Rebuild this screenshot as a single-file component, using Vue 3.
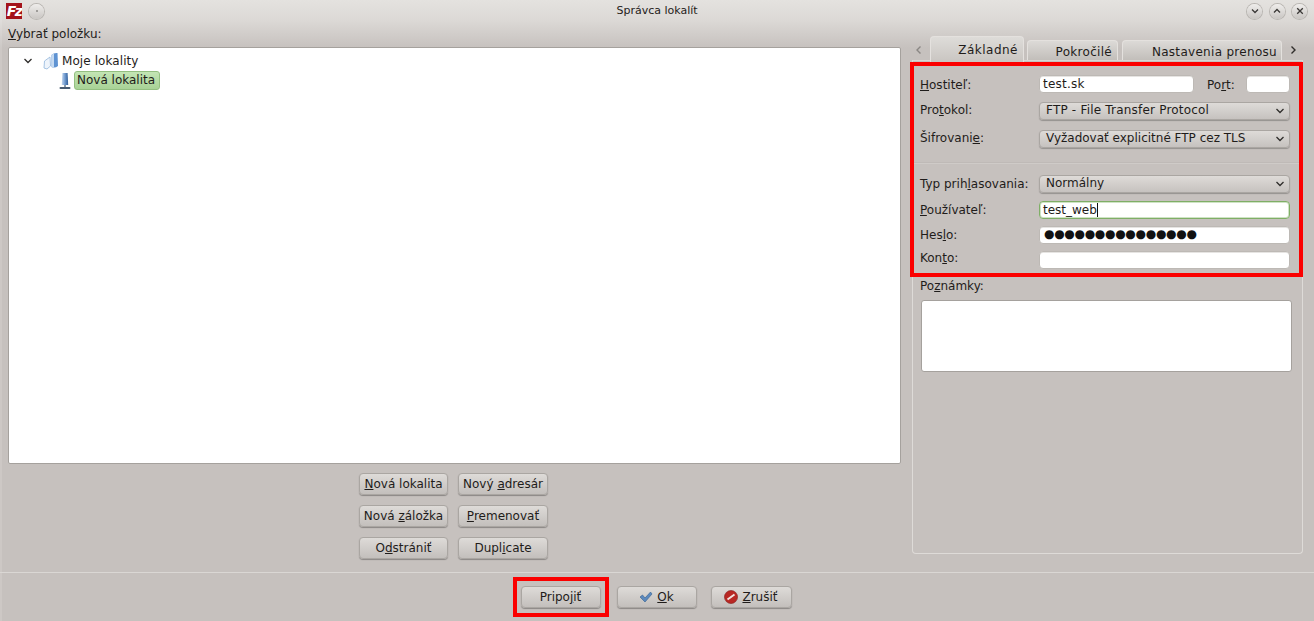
<script setup>
const actions = [
  { pre: '', key: 'N', post: 'ová lokalita' },
  { pre: 'Nový ', key: 'a', post: 'dresár' },
  { pre: 'Nová ', key: 'z', post: 'áložka' },
  { pre: '', key: 'P', post: 'remenovať' },
  { pre: 'O', key: 'd', post: 'stràniť'.replace('à', 'á') },
  { pre: 'Dupl', key: 'i', post: 'cate' }
]
</script>

<template>
  <div class="window">
    <header class="titlebar">
      <div class="tb-side tb-left">
        <span class="fz-logo">Fz</span>
        <span class="round-btn"><i class="pin"></i></span>
      </div>
      <div class="tb-title">Správca lokalít</div>
      <div class="tb-side tb-right">
        <span class="round-btn"><svg width="10" height="10" viewBox="0 0 10 10"><path d="M2 3.5 5 6.5 8 3.5" /></svg></span>
        <span class="round-btn"><svg width="10" height="10" viewBox="0 0 10 10"><path d="M2 6.5 5 3.5 8 6.5" /></svg></span>
        <span class="round-btn"><svg width="10" height="10" viewBox="0 0 10 10"><path d="M2.2 2.2 7.8 7.8M7.8 2.2 2.2 7.8" /></svg></span>
      </div>
    </header>

    <main class="main">
      <section class="left">
        <div class="left-label"><u>V</u>ybrať položku:</div>
        <div class="tree">
          <div class="tree-row root">
            <svg class="chev" width="10" height="8" viewBox="0 0 10 8"><path d="M1.5 2 5 5.5 8.5 2" /></svg>
            <svg class="folder" width="16" height="18" viewBox="0 0 16 18">
              <path d="M1.5 9 7 5 7.5 14 4 17 1 16Z" fill="#eef4fb" stroke="#9dbde0" stroke-width=".9" />
              <path d="M8.5 3 Q11 .5 14.5 1 L15 14 Q12 16.5 8.5 15Z" fill="#5f93d2" />
              <path d="M8.5 3 Q9.5 2 11 1.4 L11 15.6 Q9.5 15.5 8.5 15Z" fill="#c5daf1" />
            </svg>
            <span class="root-text">Moje lokality</span>
          </div>
          <div class="tree-row child">
            <svg class="server" width="12" height="18" viewBox="0 0 12 18">
              <defs>
                <linearGradient id="srv" x1="0" x2="1" y1="0" y2="0">
                  <stop offset="0" stop-color="#c2d6ee" />
                  <stop offset=".5" stop-color="#6f9ad0" />
                  <stop offset="1" stop-color="#2f5c96" />
                </linearGradient>
              </defs>
              <path d="M3.4 1 8.6 1 9.2 13 2.8 13Z" fill="url(#srv)" />
              <rect x="5" y="13" width="2" height="2" fill="#8a9bae" />
              <rect x="0.5" y="15" width="11" height="2" rx="1" fill="#465a72" />
            </svg>
            <span class="selected">Nová lokalita</span>
          </div>
        </div>
        <div class="actions">
          <button v-for="a in actions" :key="a.key" class="btn"><span>{{ a.pre }}<u>{{ a.key }}</u>{{ a.post }}</span></button>
        </div>
      </section>

      <section class="right">
        <div class="tabs">
          <svg class="tab-arrow dim" width="8" height="10" viewBox="0 0 8 10"><path d="M5.5 1.5 2 5 5.5 8.5" /></svg>
          <div class="tab active">Základné</div>
          <div class="tab t2">Pokročilé</div>
          <div class="tab t3">Nastavenia prenosu</div>
          <svg class="tab-arrow" width="8" height="10" viewBox="0 0 8 10"><path d="M2.5 1.5 6 5 2.5 8.5" /></svg>
        </div>
        <div class="panel">
          <div class="highlight form">
            <div class="row">
              <label class="lbl lower"><u>H</u>ostiteľ:</label>
              <div class="field host">test.sk</div>
              <label class="port-lbl lower">Po<u>r</u>t:</label>
              <div class="field port"></div>
            </div>
            <div class="row r-sel1">
              <label class="lbl raise">Pro<u>t</u>okol:</label>
              <div class="select"><span class="ftp">FTP - File Transfer Protocol</span><svg width="10" height="8" viewBox="0 0 10 8"><path d="M1.5 2 5 5.5 8.5 2" /></svg></div>
            </div>
            <div class="row r-sel2">
              <label class="lbl raise">Šifrovani<u>e</u>:</label>
              <div class="select">Vyžadovať explicitné FTP cez TLS<svg width="10" height="8" viewBox="0 0 10 8"><path d="M1.5 2 5 5.5 8.5 2" /></svg></div>
            </div>
            <div class="sep"></div>
            <div class="row r-type">
              <label class="lbl">Typ prih<u>l</u>asovania:</label>
              <div class="select">Normálny<svg width="10" height="8" viewBox="0 0 10 8"><path d="M1.5 2 5 5.5 8.5 2" /></svg></div>
            </div>
            <div class="row r-user">
              <label class="lbl"><u>P</u>oužívateľ:</label>
              <div class="field wide focus">test_web<span class="caret"></span></div>
            </div>
            <div class="row r-next">
              <label class="lbl">Hes<u>l</u>o:</label>
              <div class="field wide dots">●●●●●●●●●●●●●●●</div>
            </div>
            <div class="row r-next">
              <label class="lbl raise-more">Kon<u>t</u>o:</label>
              <div class="field wide"></div>
            </div>
          </div>
          <div class="notes-lbl">Po<u>z</u>námky:</div>
          <div class="notes"></div>
        </div>
      </section>
    </main>

    <footer class="footer">
      <div class="highlight connect"><button class="btn foot"><span>Pripo<u>j</u>iť</span></button></div>
      <button class="btn foot ok">
        <svg width="14" height="12" viewBox="0 0 14 12"><path d="M1 6 3.5 4 6 7 11.5 1 13 3 6 11Z" fill="#5b88bd" stroke="#33608f" stroke-width=".6" /></svg>
        <span><u>O</u>k</span>
      </button>
      <button class="btn foot cancel">
        <svg width="14" height="14" viewBox="0 0 14 14">
          <circle cx="7" cy="7" r="6.5" fill="#b92824" stroke="#7f1a18" stroke-width=".6" />
          <path d="M3.5 9.5 10.5 4.5" stroke="#f3e3e0" stroke-width="2" fill="none" />
        </svg>
        <span><u>Z</u>rušiť</span>
      </button>
    </footer>
  </div>
</template>

<style scoped>
.window {
  width: 1314px;
  height: 621px;
  display: flex;
  flex-direction: column;
  overflow: hidden;
  background: linear-gradient(#e4e2df 0, #dcd9d6 20px, #c6c1be 48px, #c6c1be 100%);
  font-family: "DejaVu Sans", sans-serif;
  font-size: 12px;
  color: #1f1c1a;
  box-shadow: inset 2px 0 0 rgba(255, 255, 255, .12);
}
u { text-underline-offset: 1px; }

.titlebar { height: 20px; flex: none; display: flex; align-items: center; }
.tb-side { width: 100px; display: flex; align-items: center; flex: none; padding-top: 2px; box-sizing: border-box; height: 20px; }
.tb-left { padding-left: 6px; gap: 7px; }
.tb-right { padding-right: 7px; gap: 7.5px; justify-content: flex-end; }
.tb-title { flex: 1; text-align: center; font-size: 11px; }
.fz-logo {
  width: 16px; height: 16px; background: #a4131a; color: #fff; font: italic bold 14px/16px "DejaVu Sans", sans-serif;
  text-align: center; letter-spacing: -1.5px; overflow: hidden;
}
.round-btn {
  width: 15px; height: 15px; border-radius: 50%; display: flex; align-items: center; justify-content: center;
  background: linear-gradient(#efedeb, #c9c6c3); box-shadow: 0 0 0 1px #b9b6b2;
}
.round-btn svg path { fill: none; stroke: #3a3836; stroke-width: 1.3; }
.pin { width: 2px; height: 2px; border-radius: 50%; background: #8a8784; }

.main { flex: 1; min-height: 0; display: flex; padding-left: 8px; border-bottom: 1px solid #dad7d4; }
.left { width: 893px; flex: none; display: flex; flex-direction: column; }
.left-label { height: 27px; line-height: 28px; }
.tree {
  height: 417px; box-sizing: border-box; background: #fff; border: 1px solid #a5a19d; border-radius: 2px;
  padding-top: 3px;
}
.tree-row { display: flex; align-items: center; height: 20px; }
.root { padding-left: 14px; }
.chev path, .select svg path { fill: none; stroke: #2f2d2b; stroke-width: 1.3; }
.folder { margin-left: 10px; }
.root-text { margin-left: 3px; letter-spacing: .08px; }
.child { padding-left: 50px; height: 19px; }
.selected {
  margin-left: 3px; height: 19px; line-height: 17px; padding: 0 2px; box-sizing: border-box; width: 86px; white-space: nowrap;
  background: linear-gradient(#c3e5b4, #a8d296); border: 1px solid #93bf80; border-radius: 3px;
}
.actions {
  margin: 9px auto 0 351px; display: grid; grid-template-columns: 89px 90px; gap: 10px; grid-auto-rows: 22px;
}

.btn {
  font: 12px "DejaVu Sans", sans-serif; color: #1f1c1a; padding: 0; box-sizing: border-box;
  background: linear-gradient(#dedbd8, #c3bfbc); border: 1px solid #aaa6a2; border-radius: 4px;
  box-shadow: 0 1px 1px rgba(0, 0, 0, .3);
  display: flex; align-items: center; justify-content: center; gap: 4px; white-space: nowrap;
}

.right { width: 393px; margin-left: 9px; flex: none; display: flex; flex-direction: column; }
.tabs { height: 24px; margin-top: 16px; display: flex; align-items: flex-end; flex: none; padding-left: 5px; }
.tab-arrow { margin-bottom: 5px; flex: none; }
.tab-arrow path { fill: none; stroke: #2f2d2b; stroke-width: 1.4; }
.tab-arrow.dim path { stroke: #8a8784; }
.tab {
  box-sizing: border-box; border: 1px solid #e4e1de; border-bottom: 0; border-radius: 4px 4px 0 0;
  text-align: right; padding-right: 5px; background: linear-gradient(#dcdad7, #c2beba); letter-spacing: .3px; white-space: nowrap;
}
.active {
  width: 94px; height: 26px; margin: 0 3px 0 7px; line-height: 27px; position: relative; top: 2px; letter-spacing: .5px;
  background: linear-gradient(#dedcd9, #c9c5c1);
}
.t2 { width: 91px; height: 20px; line-height: 23px; margin-right: 4px; }
.t3 { width: 160px; height: 20px; line-height: 23px; margin-right: 7px; padding-right: 4px; }

.panel {
  height: 494px; box-sizing: border-box; margin-left: 2px; border: 1px solid #dedbd8; border-top-color: #d9d6d3; border-radius: 0 0 4px 4px;
  padding: 0 10px 0 8px;
}
.highlight { border: 4px solid #fb0000; box-sizing: border-box; }
.form { width: 393px; height: 215px; margin: 1px 0 0 -11px; padding: 9px 9px 0 6px; }
.row { display: flex; align-items: center; height: 18px; }
.lbl { width: 119px; flex: none; white-space: nowrap; }
.lower { padding-top: 2px; }
.raise { padding-bottom: 2px; }
.raise-more { padding-bottom: 4px; }
.r-sel1 { margin-top: 9px; }
.r-sel2 { margin-top: 10px; }
.r-type { margin-top: 11px; }
.r-user { margin-top: 8px; }
.r-next { margin-top: 7px; }
.field {
  height: 18px; line-height: 16px; box-sizing: border-box; background: #fff; border: 1px solid #bdb9b5; border-radius: 4px; padding: 0 3px;
  white-space: nowrap; box-shadow: inset 0 1px 0 #e6e4e2;
}
.host { width: 155px; letter-spacing: .25px; }
.port-lbl { margin-left: 13px; width: 39px; }
.port { width: 44px; }
.wide { width: 251px; flex: none; }
.focus { border-color: #7fae66; box-shadow: inset 0 0 0 1px #cfe3c5; }
.caret { display: inline-block; width: 1px; height: 14px; background: #111; vertical-align: -3px; }
.dots { line-height: 15px; letter-spacing: -.3px; color: #111; padding-left: 4px; }
.select {
  width: 251px; height: 18px; line-height: 15px; box-sizing: border-box; display: flex; align-items: center; justify-content: space-between;
  padding: 0 4px 2px 6px; background: linear-gradient(#dedbd8, #c6c2bf); border: 1px solid #aaa6a2; border-radius: 4px;
  box-shadow: 0 1px 1px rgba(0, 0, 0, .25);
}
.ftp { letter-spacing: .2px; }
.select svg { margin-top: 2px; }
.sep { height: 2px; margin-top: 14px; border-top: 1px solid #b9b5b1; border-bottom: 1px solid #d8d5d2; margin-left: -6px; margin-right: -9px; box-sizing: border-box; opacity: .5; }

.notes-lbl { height: 16px; line-height: 18px; margin-left: -1px; }
.notes { height: 72px; margin-top: 7px; background: #fff; border: 1px solid #a5a19d; border-radius: 3px; box-sizing: border-box; width: 371px; }

.footer { height: 48px; flex: none; display: flex; justify-content: center; padding: 4px 0 0 0; box-sizing: border-box; align-items: flex-start; }
.connect { width: 96px; height: 40px; padding: 5px 4px 0; margin-left: -10px; }
.foot { width: 80px; height: 22px; }
.ok { margin: 9px 0 0 8px; }
.cancel { margin: 9px 0 0 14px; width: 81px; }
</style>
